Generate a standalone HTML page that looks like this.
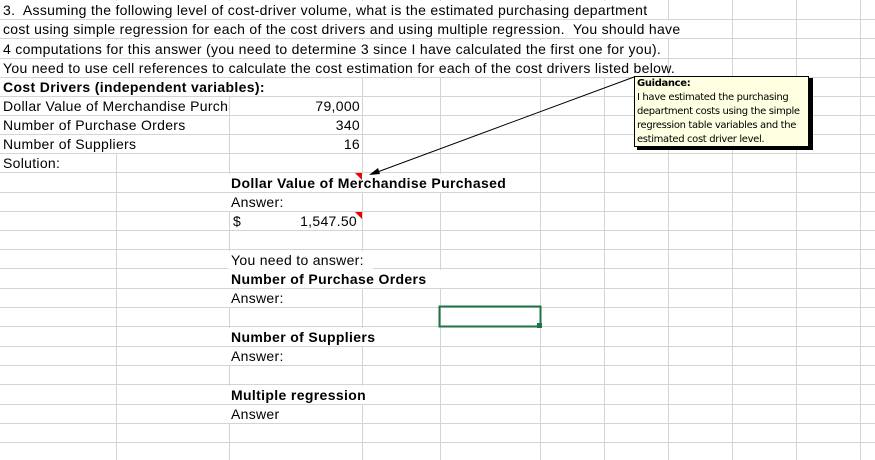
<!DOCTYPE html>
<html><head><meta charset="utf-8"><style>
body{margin:0;width:875px;height:460px;overflow:hidden;background:#fff;position:relative;font-family:"Liberation Sans",Arial,sans-serif;font-size:14px;letter-spacing:0.3px;color:#000}
.t{position:absolute;white-space:nowrap;background:#fff;line-height:18px;padding:0 2px 0 3px}
.b{font-weight:bold;letter-spacing:0.35px}
.r{text-align:right}
svg{position:absolute;left:0;top:0}
</style></head><body>
<svg width="875" height="460">
<g stroke="#d4d4d4" stroke-width="1">
<line x1="116.5" y1="0" x2="116.5" y2="460"/><line x1="229.5" y1="0" x2="229.5" y2="460"/><line x1="362.5" y1="0" x2="362.5" y2="460"/><line x1="440.5" y1="0" x2="440.5" y2="460"/><line x1="540.5" y1="0" x2="540.5" y2="460"/><line x1="604.5" y1="0" x2="604.5" y2="460"/><line x1="668.5" y1="0" x2="668.5" y2="460"/><line x1="732.5" y1="0" x2="732.5" y2="460"/><line x1="796.5" y1="0" x2="796.5" y2="460"/><line x1="860.5" y1="0" x2="860.5" y2="460"/>
<line x1="0" y1="19.5" x2="875" y2="19.5"/><line x1="0" y1="38.5" x2="875" y2="38.5"/><line x1="0" y1="58.5" x2="875" y2="58.5"/><line x1="0" y1="77.5" x2="875" y2="77.5"/><line x1="0" y1="96.5" x2="875" y2="96.5"/><line x1="0" y1="115.5" x2="875" y2="115.5"/><line x1="0" y1="134.5" x2="875" y2="134.5"/><line x1="0" y1="153.5" x2="875" y2="153.5"/><line x1="0" y1="172.5" x2="875" y2="172.5"/><line x1="0" y1="192.5" x2="875" y2="192.5"/><line x1="0" y1="211.5" x2="875" y2="211.5"/><line x1="0" y1="230.5" x2="875" y2="230.5"/><line x1="0" y1="249.5" x2="875" y2="249.5"/><line x1="0" y1="268.5" x2="875" y2="268.5"/><line x1="0" y1="288.5" x2="875" y2="288.5"/><line x1="0" y1="307.5" x2="875" y2="307.5"/><line x1="0" y1="326.5" x2="875" y2="326.5"/><line x1="0" y1="346.5" x2="875" y2="346.5"/><line x1="0" y1="365.5" x2="875" y2="365.5"/><line x1="0" y1="384.5" x2="875" y2="384.5"/><line x1="0" y1="404.5" x2="875" y2="404.5"/><line x1="0" y1="423.5" x2="875" y2="423.5"/><line x1="0" y1="442.5" x2="875" y2="442.5"/>
</g>
</svg>
<div class="t" style="left:0;top:1px;width:660px">3.&nbsp; Assuming the following level of cost-driver volume, what is the estimated purchasing department</div>
<div class="t" style="left:0;top:20px;width:680px">cost using simple regression for each of the cost drivers and using multiple regression.&nbsp; You should have</div>
<div class="t" style="left:0;top:40px;width:660px">4 computations for this answer (you need to determine 3 since I have calculated the first one for you).</div>
<div class="t" style="left:0;top:59px;width:660px">You need to use cell references to calculate the cost estimation for each of the cost drivers listed below.</div>
<div class="t b" style="left:0;top:78px;width:355px">Cost Drivers (independent variables):</div>
<div class="t" style="left:0;top:97px;width:224px;overflow:hidden">Dollar Value of Merchandise Purchased</div>
<div class="t" style="left:0;top:116px;width:224px">Number of Purchase Orders</div>
<div class="t" style="left:0;top:135px;width:224px">Number of Suppliers</div>
<div class="t" style="left:0;top:154px;width:111px">Solution:</div>
<div class="t r" style="left:231px;top:97px;width:126px">79,000</div>
<div class="t r" style="left:231px;top:116px;width:126px">340</div>
<div class="t r" style="left:231px;top:135px;width:126px">16</div>
<div class="t b" style="left:228px;top:174px;width:300px">Dollar Value of Merchandise Purchased</div>
<div class="t" style="left:228px;top:193px;width:120px">Answer:</div>
<div class="t" style="left:230px;top:212px;">$</div>
<div class="t r" style="left:260px;top:212px;width:94px;background:none">1,547.50</div>
<div class="t" style="left:228px;top:251px;width:140px">You need to answer:</div>
<div class="t b" style="left:228px;top:270px;width:208px">Number of Purchase Orders</div>
<div class="t" style="left:228px;top:289px;width:120px">Answer:</div>
<div class="t b" style="left:228px;top:328px;width:150px">Number of Suppliers</div>
<div class="t" style="left:228px;top:347px;width:120px">Answer:</div>
<div class="t b" style="left:228px;top:386px;width:150px">Multiple regression</div>
<div class="t" style="left:228px;top:405px;width:120px">Answer</div>
<svg width="875" height="460">
<polygon points="355,173 362,173 362,180" fill="#e00"/>
<polygon points="355,212 362,212 362,219" fill="#e00"/>
<line x1="634" y1="77" x2="372" y2="174" stroke="#000" stroke-width="1"/>
<polygon points="369,175 378,168 380,174" fill="#000"/>
<rect x="439.5" y="306.5" width="101" height="20" fill="none" stroke="#217346" stroke-width="2"/>
<rect x="537" y="323" width="5" height="5" fill="#217346"/>
</svg>
<div style="position:absolute;left:637px;top:78px;width:176px;height:72px;background:#000"></div>
<div style="position:absolute;left:634px;top:76px;width:175px;height:71px;background:#ffffe1;border:1px solid #000;box-sizing:border-box;font-family:'DejaVu Sans','Liberation Sans',sans-serif;font-size:10px;line-height:14px;padding:0 0 0 2px;letter-spacing:-0.35px">
<b>Guidance:</b><br>I have estimated the purchasing<br>department costs using the simple<br>regression table variables and the<br>estimated cost driver level.</div>
</body></html>
